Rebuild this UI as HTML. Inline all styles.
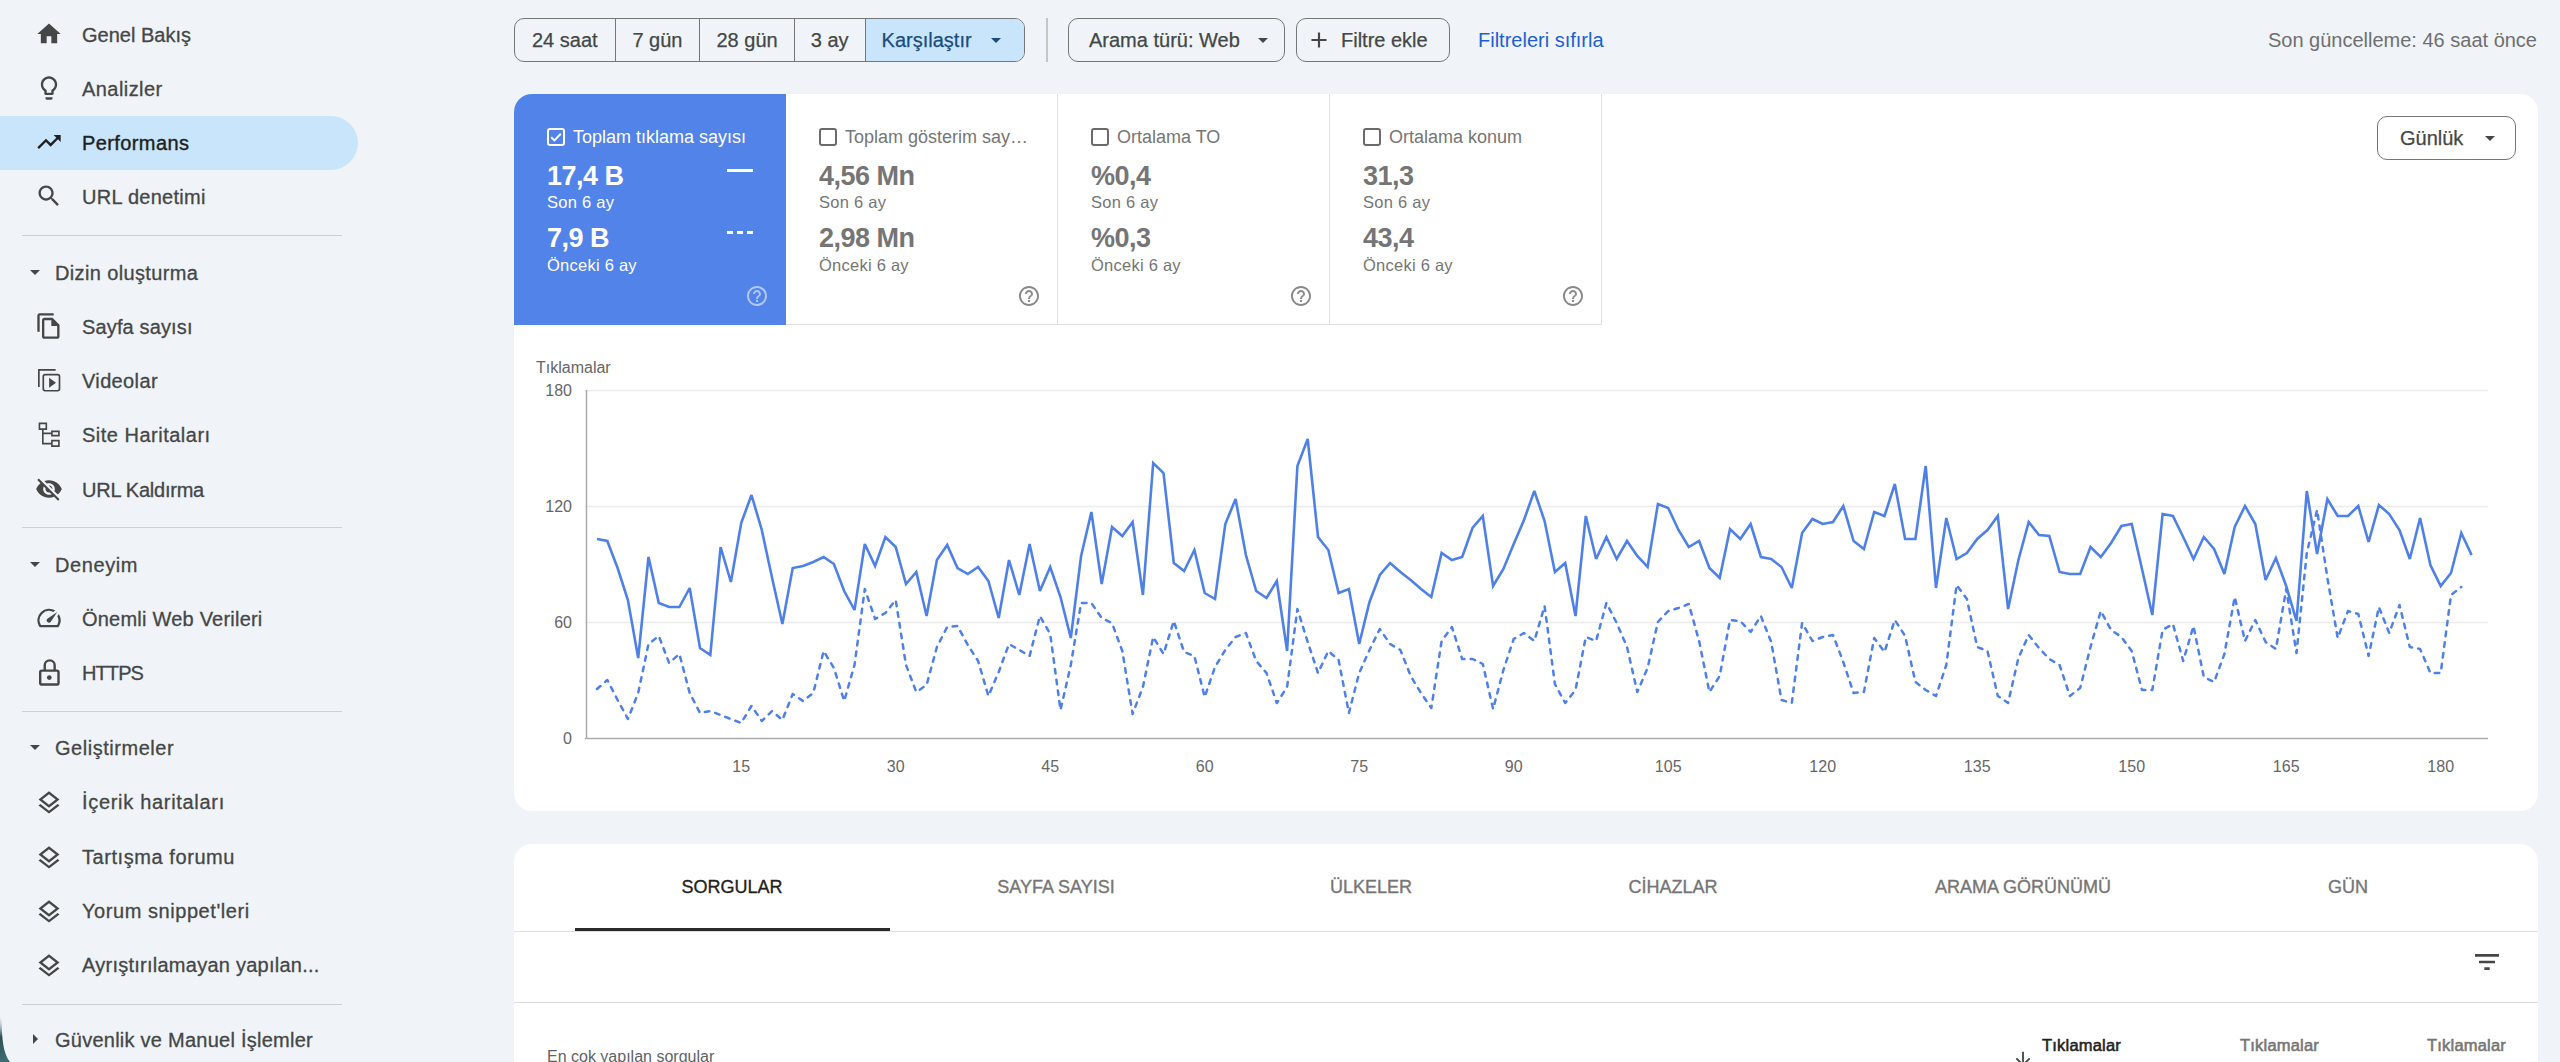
<!DOCTYPE html>
<html><head><meta charset="utf-8">
<style>
*{box-sizing:border-box;margin:0;padding:0}
html,body{width:2560px;height:1062px;overflow:hidden;background:#f0f4f9;font-family:"Liberation Sans",sans-serif;color:#1f1f1f}
.ic{position:absolute}
.nl{position:absolute;left:82px;font-size:20px;line-height:28px;color:#444746;white-space:nowrap;-webkit-text-stroke:0.3px #444746}
.nl.act{color:#1f1f1f;-webkit-text-stroke:0.4px #1f1f1f}
.nh{position:absolute;left:55px;font-size:20px;line-height:28px;color:#444746;white-space:nowrap;-webkit-text-stroke:0.3px #444746}
.hr{position:absolute;left:22px;width:320px;height:1px;background:#cdd0d3}
.pill{position:absolute;left:0;top:116px;width:358px;height:54px;background:#c9e5fb;border-radius:0 27px 27px 0}
.seg{position:absolute;top:18px;height:44px;border:1.5px solid #747775;border-radius:10px;display:flex;overflow:hidden}
.seg div{height:100%;display:flex;align-items:center;justify-content:center;font-size:20px;color:#444746;border-left:1.5px solid #747775;-webkit-text-stroke:0.25px currentColor}
.seg div:first-child{border-left:none}
.btn{position:absolute;top:18px;height:44px;border:1.5px solid #747775;border-radius:10px;font-size:20px;color:#444746;display:flex;align-items:center;-webkit-text-stroke:0.25px currentColor}
.card{position:absolute;background:#fff;border-radius:18px}
.tile{position:absolute;top:94px;width:272px;height:231px;border-right:1.5px solid #e0e0e0;border-bottom:1.5px solid #e0e0e0;color:#757575}
.tile.act{background:#5283e9;color:#fff;border:none;border-top-left-radius:18px}
.tl{position:absolute;left:59px;top:30px;font-size:18px;line-height:26px;white-space:nowrap}
.tv{position:absolute;left:33px;font-size:27px;line-height:32px;font-weight:bold;white-space:nowrap;letter-spacing:-0.5px}
.ts{position:absolute;left:33px;font-size:16.5px;line-height:22px;white-space:nowrap;letter-spacing:0.25px}
.tab{position:absolute;top:874px;font-size:18px;line-height:26px;color:#757575;white-space:nowrap;transform:translateX(-50%);-webkit-text-stroke:0.35px currentColor}
</style></head><body>
<div class="pill"></div>
<svg class="ic" style="left:35px;top:20px;width:28px;height:28px;color:#444746" viewBox="0 0 24 24" fill="currentColor"><path d="M10 20v-6h4v6h5v-8h3L12 3 2 12h3v8z"/></svg>
<div class="nl" style="top:21px;letter-spacing:0px">Genel Bakış</div>
<svg class="ic" style="left:35px;top:74px;width:28px;height:28px;color:#444746" viewBox="0 0 24 24" fill="currentColor"><path d="M9 21c0 .55.45 1 1 1h4c.55 0 1-.45 1-1v-1H9v1zm3-19C8.14 2 5 5.14 5 9c0 2.38 1.19 4.47 3 5.74V17c0 .55.45 1 1 1h6c.55 0 1-.45 1-1v-2.26c1.81-1.27 3-3.36 3-5.74 0-3.86-3.14-7-7-7zm2.85 11.1l-.85.6V16h-4v-2.3l-.85-.6C7.8 12.16 7 10.63 7 9c0-2.76 2.24-5 5-5s5 2.24 5 5c0 1.63-.8 3.16-2.15 4.1z"/></svg>
<div class="nl" style="top:75px;letter-spacing:0.44px">Analizler</div>
<svg class="ic" style="left:35px;top:128px;width:28px;height:28px;color:#1f1f1f" viewBox="0 0 24 24" fill="currentColor"><path d="M16 6l2.29 2.29-4.88 4.88-4-4L2 16.59 3.41 18l6-6 4 4 6.3-6.29L22 12V6z"/></svg>
<div class="nl act" style="top:129px;letter-spacing:0.4px">Performans</div>
<svg class="ic" style="left:35px;top:182px;width:28px;height:28px;color:#444746" viewBox="0 0 24 24" fill="currentColor"><path d="M15.5 14h-.79l-.28-.27C15.41 12.59 16 11.11 16 9.5 16 5.91 13.09 3 9.5 3S3 5.91 3 9.5 5.91 16 9.5 16c1.61 0 3.090-.59 4.23-1.57l.27.28v.79l5 4.99L20.49 19l-4.99-5zm-6 0C7.01 14 5 11.99 5 9.5S7.01 5 9.5 5 14 7.01 14 9.5 11.99 14 9.5 14z"/></svg>
<div class="nl" style="top:183px;letter-spacing:0.27px">URL denetimi</div>
<svg class="ic" style="left:35px;top:312px;width:28px;height:28px;color:#444746" viewBox="0 0 24 24" fill="currentColor"><path d="M16 1H4c-1.1 0-2 .9-2 2v14h2V3h12V1zm-1 4H8c-1.1 0-1.99.9-1.99 2L6 21c0 1.1.89 2 1.99 2H19c1.1 0 2-.9 2-2V11l-6-6zM8 21V7h6v5h5v9H8z"/></svg>
<div class="nl" style="top:313px;letter-spacing:0.14px">Sayfa sayısı</div>
<svg class="ic" style="left:35px;top:366px;width:28px;height:28px;color:#444746" viewBox="0 0 24 24" fill="currentColor"><path fill="none" stroke="currentColor" stroke-width="1.45" d="M3.3 18V3.4H17.7"/><rect x="7.1" y="7.4" width="13.9" height="13.8" rx="1.6" fill="none" stroke="currentColor" stroke-width="1.45"/><path d="M12.1 10.1L18 14.35L12.1 18.6z"/></svg>
<div class="nl" style="top:367px;letter-spacing:0.36px">Videolar</div>
<svg class="ic" style="left:35px;top:420px;width:28px;height:28px;color:#444746" viewBox="0 0 24 24" fill="currentColor"><path fill="none" stroke="currentColor" stroke-width="1.4" d="M3.8 2.9h5.9v4.9H3.8zM14.5 9.7h6v3.7h-6zM14.5 17.7h6v4.7h-6zM6.7 7.8V20.2H14.5M6.7 11.5H14.5"/></svg>
<div class="nl" style="top:421px;letter-spacing:0.5px">Site Haritaları</div>
<svg class="ic" style="left:35px;top:475px;width:28px;height:28px;color:#444746" viewBox="0 0 24 24" fill="currentColor"><path d="M12 7c2.76 0 5 2.24 5 5 0 .65-.13 1.26-.36 1.83l2.92 2.92c1.51-1.26 2.7-2.89 3.43-4.75-1.73-4.39-6-7.5-11-7.5-1.4 0-2.74.25-3.98.7l2.16 2.160C10.74 7.13 11.35 7 12 7zM2 4.27l2.28 2.28.46.46C3.08 8.3 1.78 10.02 1 12c1.73 4.39 6 7.5 11 7.5 1.55 0 3.03-.3 4.38-.84l.42.42L19.73 22 21 20.73 3.27 3 2 4.27zM7.53 9.8l1.55 1.55c-.05.21-.08.43-.08.65 0 1.66 1.34 3 3 3 .22 0 .44-.03.65-.08l1.55 1.55c-.67.33-1.41.53-2.2.53-2.76 0-5-2.24-5-5 0-.79.2-1.53.53-2.2zm4.31-.78l3.15 3.15.02-.16c0-1.66-1.34-3-3-3l-.17.01z"/></svg>
<div class="nl" style="top:476px;letter-spacing:-0.24px">URL Kaldırma</div>
<svg class="ic" style="left:35px;top:604px;width:28px;height:28px;color:#444746" viewBox="0 0 24 24" fill="currentColor"><path d="M20.38 8.57l-1.23 1.85a8 8 0 0 1-.22 7.58H5.07A8 8 0 0 1 15.58 6.85l1.85-1.23A10 10 0 0 0 3.35 19a2 2 0 0 0 1.72 1h13.85a2 2 0 0 0 1.74-1 10 10 0 0 0-.27-10.44zm-9.79 6.84a2 2 0 0 0 2.83 0l5.66-8.49-8.49 5.66a2 2 0 0 0 0 2.83z"/></svg>
<div class="nl" style="top:605px;letter-spacing:0.22px">Önemli Web Verileri</div>
<svg class="ic" style="left:35px;top:658px;width:28px;height:28px;color:#444746" viewBox="0 0 24 24" fill="currentColor"><rect x="4.45" y="10.85" width="15.7" height="11.9" rx="1.4" fill="none" stroke="currentColor" stroke-width="2.05"/><path d="M8.35 10.85V6.3A4.25 4.25 0 0 1 16.85 6.3V10.85" fill="none" stroke="currentColor" stroke-width="2.05"/><circle cx="12.25" cy="16.8" r="2"/></svg>
<div class="nl" style="top:659px;letter-spacing:-0.9px">HTTPS</div>
<svg class="ic" style="left:35px;top:788.5px;width:28px;height:28px;color:#444746" viewBox="0 0 24 24" fill="currentColor"><path d="M11.99 18.54l-7.37-5.73L3 14.07l9 7 9-7-1.63-1.27-7.38 5.74zM12 16l7.36-5.73L21 9l-9-7-9 7 1.63 1.27L12 16zm0-11.47L17.74 9 12 13.47 6.26 9 12 4.53z"/></svg>
<div class="nl" style="top:788px;letter-spacing:0.69px">İçerik haritaları</div>
<svg class="ic" style="left:35px;top:843.5px;width:28px;height:28px;color:#444746" viewBox="0 0 24 24" fill="currentColor"><path d="M11.99 18.54l-7.37-5.73L3 14.07l9 7 9-7-1.63-1.27-7.38 5.74zM12 16l7.36-5.73L21 9l-9-7-9 7 1.63 1.27L12 16zm0-11.47L17.74 9 12 13.47 6.26 9 12 4.53z"/></svg>
<div class="nl" style="top:843px;letter-spacing:0.57px">Tartışma forumu</div>
<svg class="ic" style="left:35px;top:897.5px;width:28px;height:28px;color:#444746" viewBox="0 0 24 24" fill="currentColor"><path d="M11.99 18.54l-7.37-5.73L3 14.07l9 7 9-7-1.63-1.27-7.38 5.74zM12 16l7.36-5.73L21 9l-9-7-9 7 1.63 1.27L12 16zm0-11.47L17.74 9 12 13.47 6.26 9 12 4.53z"/></svg>
<div class="nl" style="top:897px;letter-spacing:0.56px">Yorum snippet'leri</div>
<svg class="ic" style="left:35px;top:951.5px;width:28px;height:28px;color:#444746" viewBox="0 0 24 24" fill="currentColor"><path d="M11.99 18.54l-7.37-5.73L3 14.07l9 7 9-7-1.63-1.27-7.38 5.74zM12 16l7.36-5.73L21 9l-9-7-9 7 1.63 1.27L12 16zm0-11.47L17.74 9 12 13.47 6.26 9 12 4.53z"/></svg>
<div class="nl" style="top:951px;letter-spacing:0.25px">Ayrıştırılamayan yapılan...</div>
<svg class="ic" style="left:23px;top:260px;width:24px;height:24px;color:#444746" viewBox="0 0 24 24" fill="currentColor"><path d="M7 10l5 5 5-5z"/></svg>
<div class="nh" style="top:259px;letter-spacing:0.36px">Dizin oluşturma</div>
<svg class="ic" style="left:23px;top:552px;width:24px;height:24px;color:#444746" viewBox="0 0 24 24" fill="currentColor"><path d="M7 10l5 5 5-5z"/></svg>
<div class="nh" style="top:551px;letter-spacing:0.58px">Deneyim</div>
<svg class="ic" style="left:23px;top:735px;width:24px;height:24px;color:#444746" viewBox="0 0 24 24" fill="currentColor"><path d="M7 10l5 5 5-5z"/></svg>
<div class="nh" style="top:734px;letter-spacing:0.53px">Geliştirmeler</div>
<svg class="ic" style="left:23px;top:1027px;width:24px;height:24px;color:#444746" viewBox="0 0 24 24" fill="currentColor"><path d="M10 17l5-5-5-5v10z"/></svg>
<div class="nh" style="top:1026px;letter-spacing:0.25px">Güvenlik ve Manuel İşlemler</div>
<div class="hr" style="top:235px"></div>
<div class="hr" style="top:527px"></div>
<div class="hr" style="top:711px"></div>
<div class="hr" style="top:1004px"></div>
<svg style="position:absolute;left:0;top:1010px" width="20" height="52" viewBox="0 0 20 52"><defs><linearGradient id="wc" x1="0" y1="0" x2="0" y2="1"><stop offset="0" stop-color="#9fb5b5" stop-opacity="0"/><stop offset="0.45" stop-color="#2f4f52"/><stop offset="1" stop-color="#3d6d74"/></linearGradient></defs><path d="M0 6 L1.6 6 C1.6 30 3.5 44 10 52 L0 52 Z" fill="url(#wc)"/></svg>

<div class="seg" style="left:514px;width:511px">
 <div style="width:100px">24 saat</div>
 <div style="width:85px">7 gün</div>
 <div style="width:95px">28 gün</div>
 <div style="width:71px">3 ay</div>
 <div style="width:160px;background:#c9e5fb;color:#1b4c7e;justify-content:flex-start;padding-left:16px">Karşılaştır<svg viewBox="0 0 24 24" width="24" height="24" style="margin-left:12px" fill="#1b4c7e"><path d="M7 10l5 5 5-5z"/></svg></div>
</div>
<div style="position:absolute;left:1046px;top:18px;width:2px;height:44px;background:#c4c7c5"></div>
<div class="btn" style="left:1068px;width:217px;padding-left:20px">Arama türü: Web<svg viewBox="0 0 24 24" width="24" height="24" style="position:absolute;left:182px;top:9px" fill="#444746"><path d="M7 10l5 5 5-5z"/></svg></div>
<div class="btn" style="left:1296px;width:154px;padding-left:44px"><svg viewBox="0 0 24 24" width="26" height="26" style="position:absolute;left:9px;top:8px" fill="#444746"><path d="M19 13h-6v6h-2v-6H5v-2h6V5h2v6h6v2z"/></svg>Filtre ekle</div>
<div style="position:absolute;left:1478px;top:26px;font-size:20px;line-height:28px;color:#1d5fd3">Filtreleri sıfırla</div>
<div style="position:absolute;right:23px;top:26px;font-size:20px;line-height:28px;color:#6f6f6f">Son güncelleme: 46 saat önce</div>

<div class="card" style="left:514px;top:94px;width:2024px;height:717px"></div>
<div class="tile act" style="left:514px"><svg viewBox="0 0 18 18" width="18" height="18" style="position:absolute;left:33px;top:34px"><rect x="1" y="1" width="16" height="16" rx="2" fill="none" stroke="#fff" stroke-width="2"/><path d="M4.2 9.2l3.2 3.2 6.4-6.6" fill="none" stroke="#fff" stroke-width="2"/></svg>
<div class="tl">Toplam tıklama sayısı</div>
<div class="tv" style="top:66px">17,4 B</div><div class="ts" style="top:97px">Son 6 ay</div>
<div class="tv" style="top:128px">7,9 B</div><div class="ts" style="top:160px">Önceki 6 ay</div>
<div style="position:absolute;left:213px;top:75px;width:26px;height:3px;background:#fff"></div><div style="position:absolute;left:213px;top:137px;width:26px;height:3px;background:repeating-linear-gradient(90deg,#fff 0 6px,transparent 6px 10px)"></div>
<svg viewBox="0 0 24 24" width="24" height="24" style="position:absolute;left:231px;top:190px" fill="rgba(255,255,255,0.55)"><path d="M11 18h2v-2h-2v2zm1-16C6.48 2 2 6.48 2 12s4.48 10 10 10 10-4.48 10-10S17.52 2 12 2zm0 18c-4.41 0-8-3.59-8-8s3.59-8 8-8 8 3.59 8 8-3.59 8-8 8zm0-14c-2.21 0-4 1.79-4 4h2c0-1.1.9-2 2-2s2 .9 2 2c0 2-3 1.75-3 5h2c0-2.25 3-2.5 3-5 0-2.21-1.79-4-4-4z"/></svg>
</div>
<div class="tile" style="left:786px"><svg viewBox="0 0 18 18" width="18" height="18" style="position:absolute;left:33px;top:34px"><rect x="1" y="1" width="16" height="16" rx="2" fill="none" stroke="#6b6b6b" stroke-width="2"/></svg>
<div class="tl">Toplam gösterim say…</div>
<div class="tv" style="top:66px">4,56 Mn</div><div class="ts" style="top:97px">Son 6 ay</div>
<div class="tv" style="top:128px">2,98 Mn</div><div class="ts" style="top:160px">Önceki 6 ay</div>

<svg viewBox="0 0 24 24" width="24" height="24" style="position:absolute;left:231px;top:190px" fill="#8a8a8a"><path d="M11 18h2v-2h-2v2zm1-16C6.48 2 2 6.48 2 12s4.48 10 10 10 10-4.48 10-10S17.52 2 12 2zm0 18c-4.41 0-8-3.59-8-8s3.59-8 8-8 8 3.59 8 8-3.59 8-8 8zm0-14c-2.21 0-4 1.79-4 4h2c0-1.1.9-2 2-2s2 .9 2 2c0 2-3 1.75-3 5h2c0-2.25 3-2.5 3-5 0-2.21-1.79-4-4-4z"/></svg>
</div>
<div class="tile" style="left:1058px"><svg viewBox="0 0 18 18" width="18" height="18" style="position:absolute;left:33px;top:34px"><rect x="1" y="1" width="16" height="16" rx="2" fill="none" stroke="#6b6b6b" stroke-width="2"/></svg>
<div class="tl">Ortalama TO</div>
<div class="tv" style="top:66px">%0,4</div><div class="ts" style="top:97px">Son 6 ay</div>
<div class="tv" style="top:128px">%0,3</div><div class="ts" style="top:160px">Önceki 6 ay</div>

<svg viewBox="0 0 24 24" width="24" height="24" style="position:absolute;left:231px;top:190px" fill="#8a8a8a"><path d="M11 18h2v-2h-2v2zm1-16C6.48 2 2 6.48 2 12s4.48 10 10 10 10-4.48 10-10S17.52 2 12 2zm0 18c-4.41 0-8-3.59-8-8s3.59-8 8-8 8 3.59 8 8-3.59 8-8 8zm0-14c-2.21 0-4 1.79-4 4h2c0-1.1.9-2 2-2s2 .9 2 2c0 2-3 1.75-3 5h2c0-2.25 3-2.5 3-5 0-2.21-1.79-4-4-4z"/></svg>
</div>
<div class="tile" style="left:1330px"><svg viewBox="0 0 18 18" width="18" height="18" style="position:absolute;left:33px;top:34px"><rect x="1" y="1" width="16" height="16" rx="2" fill="none" stroke="#6b6b6b" stroke-width="2"/></svg>
<div class="tl">Ortalama konum</div>
<div class="tv" style="top:66px">31,3</div><div class="ts" style="top:97px">Son 6 ay</div>
<div class="tv" style="top:128px">43,4</div><div class="ts" style="top:160px">Önceki 6 ay</div>

<svg viewBox="0 0 24 24" width="24" height="24" style="position:absolute;left:231px;top:190px" fill="#8a8a8a"><path d="M11 18h2v-2h-2v2zm1-16C6.48 2 2 6.48 2 12s4.48 10 10 10 10-4.48 10-10S17.52 2 12 2zm0 18c-4.41 0-8-3.59-8-8s3.59-8 8-8 8 3.59 8 8-3.59 8-8 8zm0-14c-2.21 0-4 1.79-4 4h2c0-1.1.9-2 2-2s2 .9 2 2c0 2-3 1.75-3 5h2c0-2.25 3-2.5 3-5 0-2.21-1.79-4-4-4z"/></svg>
</div>
<div class="btn" style="left:2377px;top:116px;width:139px;padding-left:22px;color:#444746">Günlük<svg viewBox="0 0 24 24" width="24" height="24" style="position:absolute;left:100px;top:9px" fill="#444746"><path d="M7 10l5 5 5-5z"/></svg></div>

<svg style="position:absolute;left:0;top:0" width="2560" height="1062">
 <text x="536" y="373" font-size="16" fill="#666666" font-family="Liberation Sans">Tıklamalar</text>
 <g font-size="16" fill="#666666" font-family="Liberation Sans" text-anchor="end">
  <text x="572" y="396">180</text><text x="572" y="512">120</text><text x="572" y="628">60</text><text x="572" y="744">0</text>
 </g>
 <g stroke="#ececec" stroke-width="1.5"><line x1="585" y1="390.5" x2="2488" y2="390.5"/><line x1="585" y1="506.5" x2="2488" y2="506.5"/><line x1="585" y1="622.5" x2="2488" y2="622.5"/></g>
 <line x1="586.5" y1="390" x2="586.5" y2="739" stroke="#ababab" stroke-width="1.5"/>
 <line x1="585" y1="738.5" x2="2488" y2="738.5" stroke="#ababab" stroke-width="1.5"/>
 <g font-size="16" fill="#666666" font-family="Liberation Sans"><text x="741.2" y="772" text-anchor="middle">15</text>
<text x="895.7" y="772" text-anchor="middle">30</text>
<text x="1050.2" y="772" text-anchor="middle">45</text>
<text x="1204.7" y="772" text-anchor="middle">60</text>
<text x="1359.2" y="772" text-anchor="middle">75</text>
<text x="1513.7" y="772" text-anchor="middle">90</text>
<text x="1668.2" y="772" text-anchor="middle">105</text>
<text x="1822.7" y="772" text-anchor="middle">120</text>
<text x="1977.2" y="772" text-anchor="middle">135</text>
<text x="2131.7" y="772" text-anchor="middle">150</text>
<text x="2286.2" y="772" text-anchor="middle">165</text>
<text x="2440.7" y="772" text-anchor="middle">180</text></g>
 <path d="M597.0 689.0 L607.3 680.0 L617.6 700.0 L627.9 719.0 L638.2 693.0 L648.5 644.0 L658.8 636.0 L669.1 663.0 L679.4 654.0 L689.7 693.0 L700.0 713.0 L710.3 711.0 L720.6 715.0 L730.9 719.0 L741.2 723.0 L751.5 706.0 L761.8 721.0 L772.1 711.0 L782.4 720.0 L792.7 694.0 L803.0 701.0 L813.3 693.0 L823.6 651.0 L833.9 668.0 L844.2 701.0 L854.5 665.0 L864.8 589.0 L875.1 619.0 L885.4 613.0 L895.7 600.0 L906.0 665.0 L916.3 692.0 L926.6 685.0 L936.9 647.0 L947.2 627.0 L957.5 626.0 L967.8 645.0 L978.1 661.0 L988.4 696.0 L998.7 672.0 L1009.0 644.0 L1019.3 650.0 L1029.6 656.0 L1039.9 616.0 L1050.2 634.0 L1060.5 710.0 L1070.8 665.0 L1081.1 603.0 L1091.4 603.0 L1101.7 618.0 L1112.0 623.0 L1122.3 651.0 L1132.6 714.0 L1142.9 687.0 L1153.2 637.0 L1163.5 654.0 L1173.8 621.0 L1184.1 652.0 L1194.4 656.0 L1204.7 697.0 L1215.0 667.0 L1225.3 650.0 L1235.6 637.0 L1245.9 633.0 L1256.2 661.0 L1266.5 673.0 L1276.8 703.0 L1287.1 687.0 L1297.4 609.0 L1307.7 642.0 L1318.0 673.0 L1328.3 651.0 L1338.6 660.0 L1348.9 713.0 L1359.2 673.0 L1369.5 650.0 L1379.8 629.0 L1390.1 644.0 L1400.4 650.0 L1410.7 676.0 L1421.0 693.0 L1431.3 708.0 L1441.6 641.0 L1451.9 627.0 L1462.2 659.0 L1472.5 659.0 L1482.8 664.0 L1493.1 709.0 L1503.4 670.0 L1513.7 639.0 L1524.0 633.0 L1534.3 641.0 L1544.6 606.0 L1554.9 684.0 L1565.2 703.0 L1575.5 690.0 L1585.8 637.0 L1596.1 641.0 L1606.4 603.0 L1616.7 623.0 L1627.0 647.0 L1637.3 692.0 L1647.6 668.0 L1657.9 622.0 L1668.2 611.0 L1678.5 608.0 L1688.8 604.0 L1699.1 641.0 L1709.4 692.0 L1719.7 676.0 L1730.0 620.0 L1740.3 621.0 L1750.6 632.0 L1760.9 616.0 L1771.2 642.0 L1781.5 700.0 L1791.8 703.0 L1802.1 623.0 L1812.4 641.0 L1822.7 637.0 L1833.0 635.0 L1843.3 662.0 L1853.6 693.0 L1863.9 692.0 L1874.2 638.0 L1884.5 652.0 L1894.8 620.0 L1905.1 636.0 L1915.4 682.0 L1925.7 690.0 L1936.0 696.0 L1946.3 665.0 L1956.6 585.0 L1966.9 599.0 L1977.2 647.0 L1987.5 651.0 L1997.8 696.0 L2008.1 703.0 L2018.4 658.0 L2028.7 635.0 L2039.0 648.0 L2049.3 659.0 L2059.6 665.0 L2069.9 696.0 L2080.2 688.0 L2090.5 647.0 L2100.8 611.0 L2111.1 630.0 L2121.4 637.0 L2131.7 651.0 L2142.0 690.0 L2152.3 690.0 L2162.6 630.0 L2172.9 624.0 L2183.2 661.0 L2193.5 626.0 L2203.8 677.0 L2214.1 682.0 L2224.4 654.0 L2234.7 597.0 L2245.0 641.0 L2255.3 620.0 L2265.6 642.0 L2275.9 649.0 L2286.2 589.0 L2296.5 653.0 L2306.8 553.0 L2317.1 510.0 L2327.4 578.0 L2337.7 638.0 L2348.0 611.0 L2358.3 614.0 L2368.6 656.0 L2378.9 607.0 L2389.2 633.0 L2399.5 605.0 L2409.8 647.0 L2420.1 649.0 L2430.4 673.0 L2440.7 673.0 L2451.0 595.0 L2461.3 587.0" fill="none" stroke="#4f80e8" stroke-width="2.5" stroke-dasharray="4.6 6.2" stroke-linecap="round" stroke-linejoin="round"/>
 <path d="M597.0 539.0 L607.3 541.0 L617.6 568.0 L627.9 600.0 L638.2 658.0 L648.5 557.0 L658.8 603.0 L669.1 607.0 L679.4 607.0 L689.7 588.0 L700.0 648.0 L710.3 655.0 L720.6 547.0 L730.9 582.0 L741.2 523.0 L751.5 495.0 L761.8 530.0 L772.1 578.0 L782.4 624.0 L792.7 568.0 L803.0 566.0 L813.3 562.0 L823.6 557.0 L833.9 564.0 L844.2 591.0 L854.5 610.0 L864.8 544.0 L875.1 566.0 L885.4 537.0 L895.7 547.0 L906.0 584.0 L916.3 572.0 L926.6 616.0 L936.9 560.0 L947.2 545.0 L957.5 568.0 L967.8 574.0 L978.1 567.0 L988.4 581.0 L998.7 618.0 L1009.0 560.0 L1019.3 595.0 L1029.6 544.0 L1039.9 591.0 L1050.2 567.0 L1060.5 597.0 L1070.8 638.0 L1081.1 556.0 L1091.4 512.0 L1101.7 584.0 L1112.0 527.0 L1122.3 536.0 L1132.6 522.0 L1142.9 595.0 L1153.2 463.0 L1163.5 473.0 L1173.8 563.0 L1184.1 571.0 L1194.4 550.0 L1204.7 593.0 L1215.0 599.0 L1225.3 524.0 L1235.6 499.0 L1245.9 555.0 L1256.2 591.0 L1266.5 598.0 L1276.8 581.0 L1287.1 651.0 L1297.4 466.0 L1307.7 439.0 L1318.0 537.0 L1328.3 550.0 L1338.6 593.0 L1348.9 589.0 L1359.2 644.0 L1369.5 602.0 L1379.8 575.0 L1390.1 563.0 L1400.4 572.0 L1410.7 580.0 L1421.0 589.0 L1431.3 597.0 L1441.6 553.0 L1451.9 560.0 L1462.2 557.0 L1472.5 528.0 L1482.8 516.0 L1493.1 586.0 L1503.4 569.0 L1513.7 544.0 L1524.0 520.0 L1534.3 491.0 L1544.6 521.0 L1554.9 572.0 L1565.2 563.0 L1575.5 616.0 L1585.8 516.0 L1596.1 559.0 L1606.4 537.0 L1616.7 559.0 L1627.0 541.0 L1637.3 556.0 L1647.6 567.0 L1657.9 504.0 L1668.2 508.0 L1678.5 530.0 L1688.8 547.0 L1699.1 541.0 L1709.4 568.0 L1719.7 578.0 L1730.0 529.0 L1740.3 539.0 L1750.6 524.0 L1760.9 557.0 L1771.2 559.0 L1781.5 567.0 L1791.8 588.0 L1802.1 533.0 L1812.4 519.0 L1822.7 524.0 L1833.0 522.0 L1843.3 506.0 L1853.6 541.0 L1863.9 549.0 L1874.2 512.0 L1884.5 516.0 L1894.8 484.0 L1905.1 539.0 L1915.4 539.0 L1925.7 466.0 L1936.0 588.0 L1946.3 518.0 L1956.6 559.0 L1966.9 553.0 L1977.2 539.0 L1987.5 530.0 L1997.8 516.0 L2008.1 609.0 L2018.4 560.0 L2028.7 522.0 L2039.0 535.0 L2049.3 536.0 L2059.6 572.0 L2069.9 574.0 L2080.2 574.0 L2090.5 547.0 L2100.8 557.0 L2111.1 543.0 L2121.4 526.0 L2131.7 524.0 L2142.0 569.0 L2152.3 615.0 L2162.6 514.0 L2172.9 516.0 L2183.2 537.0 L2193.5 559.0 L2203.8 537.0 L2214.1 549.0 L2224.4 574.0 L2234.7 527.0 L2245.0 506.0 L2255.3 524.0 L2265.6 580.0 L2275.9 558.0 L2286.2 586.0 L2296.5 621.0 L2306.8 491.0 L2317.1 554.0 L2327.4 499.0 L2337.7 516.0 L2348.0 516.0 L2358.3 506.0 L2368.6 542.0 L2378.9 505.0 L2389.2 514.0 L2399.5 530.0 L2409.8 559.0 L2420.1 518.0 L2430.4 565.0 L2440.7 586.0 L2451.0 573.0 L2461.3 533.0 L2471.6 555.0" fill="none" stroke="#4f80e8" stroke-width="2.6" stroke-linejoin="miter" stroke-miterlimit="3"/>
</svg>

<div class="card" style="left:514px;top:844px;width:2024px;height:260px"></div>
<div class="tab" style="left:732px;color:#1f1f1f">SORGULAR</div>
<div class="tab" style="left:1056px">SAYFA SAYISI</div>
<div class="tab" style="left:1371px">ÜLKELER</div>
<div class="tab" style="left:1673px">CİHAZLAR</div>
<div class="tab" style="left:2023px">ARAMA GÖRÜNÜMÜ</div>
<div class="tab" style="left:2348px">GÜN</div>
<div style="position:absolute;left:575px;top:928px;width:315px;height:3px;background:#2a2a2a"></div>
<div style="position:absolute;left:514px;top:931px;width:2024px;height:1px;background:#dedede"></div>
<svg viewBox="0 0 24 24" width="32" height="32" style="position:absolute;left:2471px;top:946px" fill="#444746"><path d="M10 18h4v-2h-4v2zM3 6v2h18V6H3zm3 7h12v-2H6v2z"/></svg>
<div style="position:absolute;left:514px;top:1002px;width:2024px;height:1px;background:#dedede"></div>
<div style="position:absolute;left:547px;top:1046px;font-size:16px;line-height:22px;color:#5f6368">En çok yapılan sorgular</div>
<div style="position:absolute;left:2042px;top:1034px;font-size:16.5px;line-height:22px;color:#1f1f1f;-webkit-text-stroke:0.55px #1f1f1f;letter-spacing:0.2px">Tıklamalar</div>
<div style="position:absolute;left:2240px;top:1034px;font-size:16.5px;line-height:22px;color:#757575;-webkit-text-stroke:0.55px #757575;letter-spacing:0.2px">Tıklamalar</div>
<div style="position:absolute;left:2427px;top:1034px;font-size:16.5px;line-height:22px;color:#757575;-webkit-text-stroke:0.55px #757575;letter-spacing:0.2px">Tıklamalar</div>
<svg viewBox="0 0 24 24" width="22" height="22" style="position:absolute;left:2012px;top:1048px" fill="#444746"><path d="M20 12l-1.41-1.41L13 16.17V4h-2v12.17l-5.58-5.59L4 12l8 8 8-8z"/></svg>
</body></html>
